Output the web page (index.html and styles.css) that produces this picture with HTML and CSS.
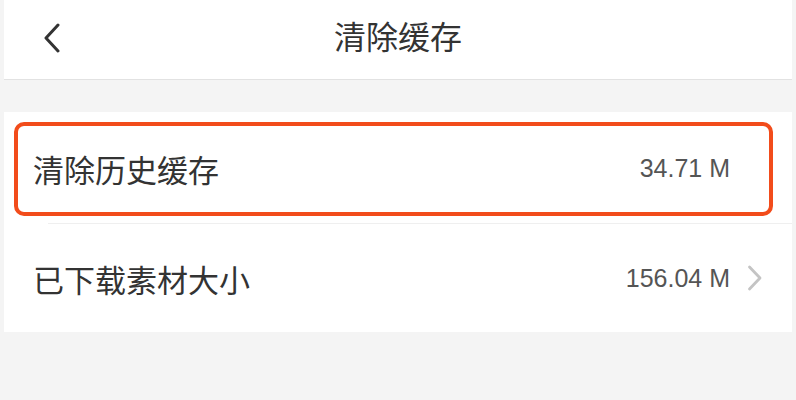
FILE: index.html
```html
<!DOCTYPE html>
<html lang="zh-CN">
<head>
<meta charset="utf-8">
<title>清除缓存</title>
<link rel="stylesheet" href="styles.css">
</head>
<body>
<div class="page">
  <header class="navbar">
    <span class="back">
      <svg width="18" height="30" viewBox="0 0 18 30"><path d="M15 2 L3 15 L15 28" fill="none" stroke="#333" stroke-width="3" stroke-linecap="round" stroke-linejoin="round"/></svg>
    </span>
    <h1 class="title">清除缓存</h1>
  </header>
  <div class="list">
    <div class="row row-first">
      <span class="label">清除历史缓存</span>
      <span class="value">34.71 M</span>
      <span class="chev chev-hidden"></span>
      <div class="highlight"></div>
    </div>
    <div class="row">
      <span class="label">已下载素材大小</span>
      <span class="value">156.04 M</span>
      <span class="chev">
        <svg width="16" height="26" viewBox="0 0 16 26"><path d="M2.5 2 L13 13 L2.5 24" fill="none" stroke="#c4c4c4" stroke-width="2.8" stroke-linecap="round" stroke-linejoin="round"/></svg>
      </span>
    </div>
  </div>
</div>
</body>
</html>
```
FILE: styles.css
```css
html, body {
  margin: 0;
  padding: 0;
  background: #f4f4f4;
  width: 796px;
  height: 400px;
  overflow: hidden;
  font-family: "Liberation Sans", "Noto Sans CJK SC", sans-serif;
  color: #333;
}
.page {
  margin: 0 4px;
}
.navbar {
  position: relative;
  height: 79px;
  background: #fff;
  border-bottom: 1px solid #e2e2e2;
  display: flex;
  align-items: center;
  justify-content: center;
}
.back {
  position: absolute;
  left: 39px;
  top: 23px;
  display: flex;
}
.title {
  margin: 0;
  font-size: 32px;
  font-weight: normal;
  color: #333;
  line-height: 1;
  margin-top: -4px;
}
.list {
  margin-top: 32px;
  background: #fff;
}
.row {
  position: relative;
  display: flex;
  align-items: center;
  height: 108px;
  padding: 0 29px 0 29px;
}
.row-first {
  height: 112px;
  box-sizing: border-box;
}
.row-first::after {
  content: "";
  position: absolute;
  left: 44px;
  right: 0;
  bottom: 0;
  height: 1px;
  background: #efefef;
}
.label {
  flex: 1;
  font-size: 31px;
  color: #333;
}
.value {
  font-size: 25px;
  color: #555;
}
.chev {
  width: 16px;
  margin-left: 17px;
  display: flex;
}
.chev-hidden {
  visibility: hidden;
}
.highlight {
  position: absolute;
  left: 10px;
  right: 19px;
  top: 10px;
  bottom: 8px;
  border: 4px solid #f24c1b;
  border-radius: 10px;
}
```
